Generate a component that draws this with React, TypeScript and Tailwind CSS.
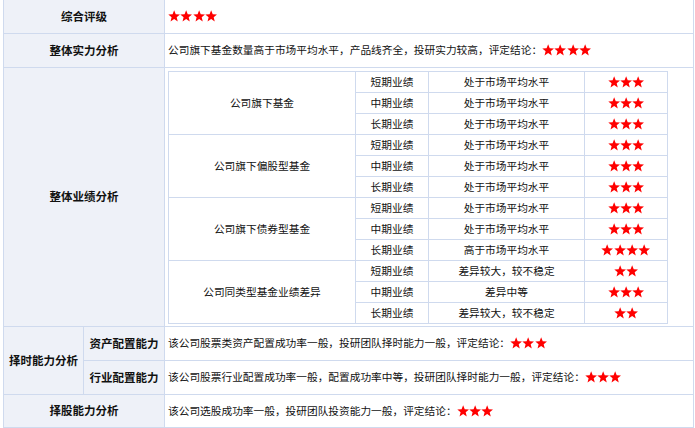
const Stars = ({ n }: { n: number }) => (
  <span className="inline-flex items-center align-middle">
    {Array.from({ length: n }).map((_, i) => (
      <svg key={i} viewBox="0 0 24 24" className="w-[12.3px] h-[12.3px]" fill="#ff0000">
        <polygon points="12,0.5 15.06,8.29 23.41,8.79 16.95,14.11 19.05,22.21 12,17.7 4.95,22.21 7.05,14.11 0.59,8.79 8.94,8.29" />
      </svg>
    ))}
  </span>
);

const groups = [
  {
    name: '公司旗下基金',
    rows: [
      ['短期业绩', '处于市场平均水平', 3],
      ['中期业绩', '处于市场平均水平', 3],
      ['长期业绩', '处于市场平均水平', 3],
    ],
  },
  {
    name: '公司旗下偏股型基金',
    rows: [
      ['短期业绩', '处于市场平均水平', 3],
      ['中期业绩', '处于市场平均水平', 3],
      ['长期业绩', '处于市场平均水平', 3],
    ],
  },
  {
    name: '公司旗下债券型基金',
    rows: [
      ['短期业绩', '处于市场平均水平', 3],
      ['中期业绩', '处于市场平均水平', 3],
      ['长期业绩', '高于市场平均水平', 4],
    ],
  },
  {
    name: '公司同类型基金业绩差异',
    rows: [
      ['短期业绩', '差异较大，较不稳定', 2],
      ['中期业绩', '差异中等', 3],
      ['长期业绩', '差异较大，较不稳定', 2],
    ],
  },
] as const;

const label = 'border border-[#cfdaee] bg-[#eef1f8] font-bold text-[11.5px] text-center text-[#111]';
const cell = 'border border-[#cfdaee] bg-white pl-[3px] text-[10.7px] text-[#111]';
const inner = 'border border-[#cfdaee] text-center h-[21px] p-0';

const App = () => {
  return (
    <div
      className="w-[695px] h-[428px] bg-white overflow-hidden"
      style={{ fontFamily: '"Noto Sans CJK SC", "Noto Sans", sans-serif' }}
    >
      <table className="border-collapse table-fixed w-[690px] ml-[3px] -mt-px leading-none">
        <colgroup>
          <col className="w-[80px]" />
          <col className="w-[81px]" />
          <col className="w-[529px]" />
        </colgroup>
        <tbody>
          <tr>
            <td colSpan={2} className={`${label} h-[34px]`}>综合评级</td>
            <td className={cell}><Stars n={4} /></td>
          </tr>
          <tr>
            <td colSpan={2} className={`${label} h-[34px]`}>整体实力分析</td>
            <td className={cell}>
              <span className="align-middle">公司旗下基金数量高于市场平均水平，产品线齐全，投研实力较高，评定结论：</span>
              <Stars n={4} />
            </td>
          </tr>
          <tr>
            <td colSpan={2} className={label}>整体业绩分析</td>
            <td className="border border-[#cfdaee] bg-white pt-[3px] pb-[2px] pl-[3px] align-top">
              <table className="border-collapse table-fixed w-[499px] text-[10.7px] text-[#111]">
                <colgroup>
                  <col className="w-[187px]" />
                  <col className="w-[73px]" />
                  <col className="w-[156px]" />
                  <col className="w-[83px]" />
                </colgroup>
                <tbody>
                  {groups.map((g) =>
                    g.rows.map((r, i) => (
                      <tr key={g.name + i}>
                        {i === 0 && (
                          <td rowSpan={3} className={inner}>{g.name}</td>
                        )}
                        <td className={inner}>{r[0]}</td>
                        <td className={inner}>{r[1]}</td>
                        <td className={inner}><Stars n={r[2]} /></td>
                      </tr>
                    ))
                  )}
                </tbody>
              </table>
            </td>
          </tr>
          <tr>
            <td rowSpan={2} className={label}>择时能力分析</td>
            <td className={`${label} h-[34px]`}>资产配置能力</td>
            <td className={cell}>
              <span className="align-middle">该公司股票类资产配置成功率一般，投研团队择时能力一般，评定结论：</span>
              <Stars n={3} />
            </td>
          </tr>
          <tr>
            <td className={`${label} h-[34px]`}>行业配置能力</td>
            <td className={cell}>
              <span className="align-middle">该公司股票行业配置成功率一般，配置成功率中等，投研团队择时能力一般，评定结论：</span>
              <Stars n={3} />
            </td>
          </tr>
          <tr>
            <td colSpan={2} className={`${label} h-[33px]`}>择股能力分析</td>
            <td className={cell}>
              <span className="align-middle">该公司选股成功率一般，投研团队投资能力一般，评定结论：</span>
              <Stars n={3} />
            </td>
          </tr>
        </tbody>
      </table>
    </div>
  );
};

export default App;
